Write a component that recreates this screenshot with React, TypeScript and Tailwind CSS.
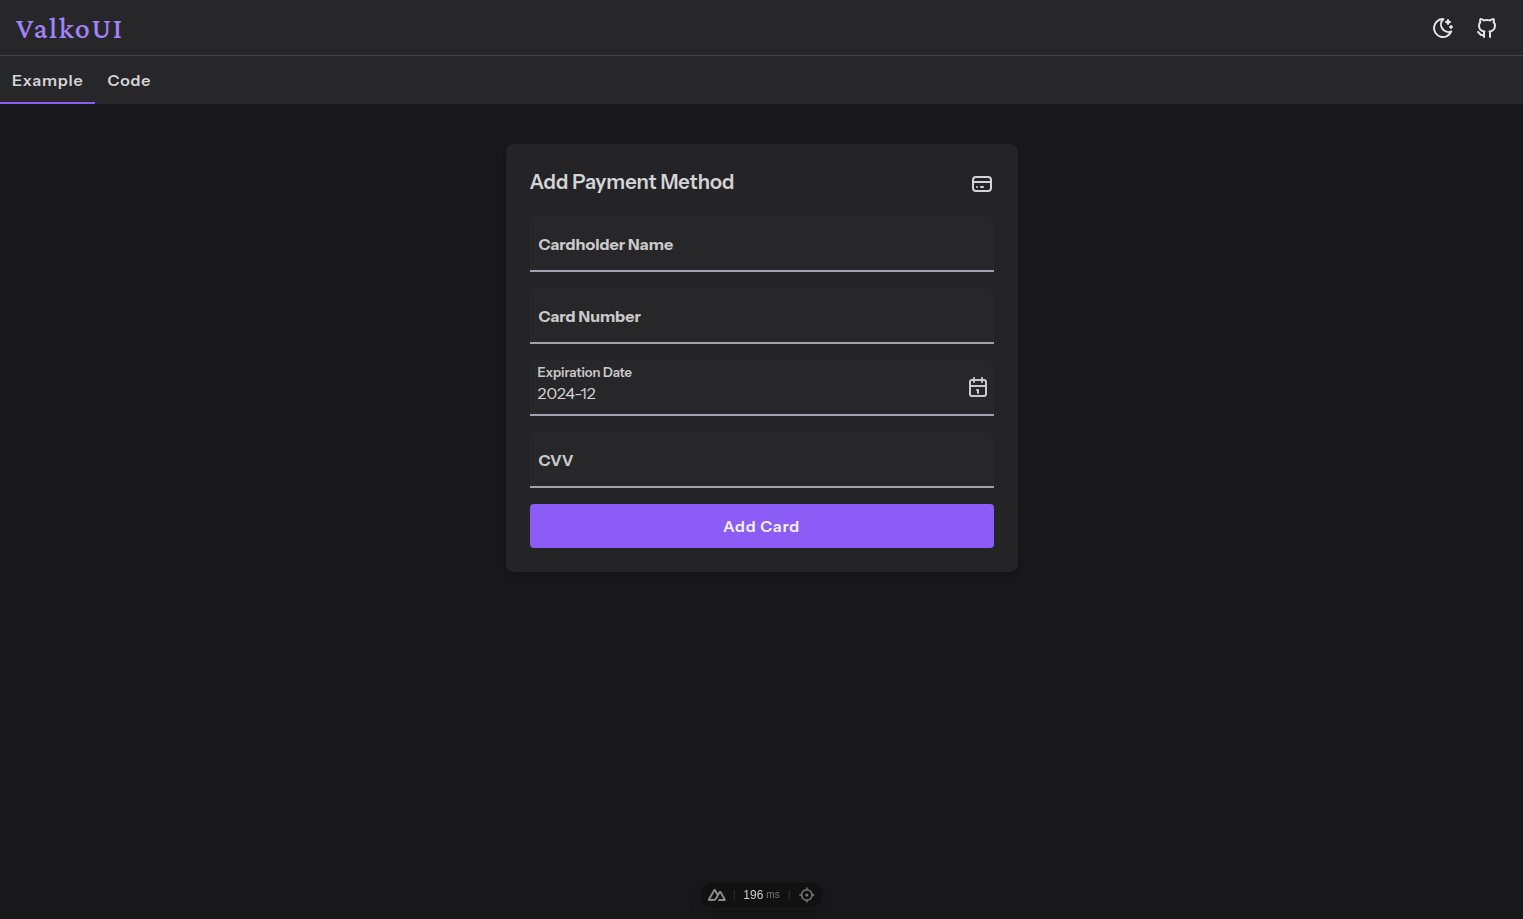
import { useState } from "react";
import { TbBrandGithub, TbCalendar, TbCreditCard, TbMoonStars } from "react-icons/tb";

type FieldProps = {
  id: string;
  label: string;
};

function Field({ id, label }: FieldProps) {
  return (
    <div className="relative rounded-t-lg border-b-2 border-[#a1a1b5] bg-[#272729]">
      <input
        id={id}
        type="text"
        placeholder=" "
        className="peer block h-[54px] w-full bg-transparent px-2 pt-4 text-base text-zinc-300 outline-none"
      />
      <label
        htmlFor={id}
        className="pointer-events-none absolute top-1 left-[9px] text-[13px] leading-4 font-bold text-[#cacaca] peer-placeholder-shown:top-4 peer-placeholder-shown:text-base peer-placeholder-shown:leading-6"
      >
        {label}
      </label>
    </div>
  );
}

function DateField() {
  return (
    <div className="flex h-14 items-center justify-between rounded-t-lg border-b-2 border-[#a1a1b5] bg-[#272729] px-1">
      <div className="flex grow flex-col pb-1">
        <label htmlFor="expiration" className="pl-1 text-[13px] leading-4 font-semibold text-[#cacaca]">
          Expiration Date
        </label>
        <input
          id="expiration"
          type="text"
          defaultValue="2024-12"
          className="h-[26px] w-full bg-transparent pl-1 text-base text-zinc-300 outline-none"
        />
      </div>
      <button type="button" aria-label="Open calendar" className="text-[#cacaca]">
        <TbCalendar className="size-6" />
      </button>
    </div>
  );
}

function DevBar() {
  return (
    <div className="fixed bottom-[10px] left-1/2 flex h-7 -translate-x-1/2 items-center gap-2 rounded-full border border-[#1c1c1c] bg-[#111111] px-2 font-['Liberation_Sans',sans-serif] shadow-lg">
      <button type="button" aria-label="Toggle DevTools" className="text-[#8c8c8c]">
        <svg viewBox="0 0 324 216" className="h-3 w-[18px]" fill="currentColor">
          <path d="M181.767 216h120.12c3.815 0 7.563-1.045 10.867-3.029a22.28 22.28 0 0 0 7.953-8.277 23.12 23.12 0 0 0-.01-22.605L240.023 42.49a22.28 22.28 0 0 0-7.95-8.275 21.3 21.3 0 0 0-21.728 0 22.28 22.28 0 0 0-7.95 8.275l-20.628 35.724-40.328-69.886a22.28 22.28 0 0 0-7.956-8.273 21.3 21.3 0 0 0-21.73 0 22.28 22.28 0 0 0-7.955 8.273L3.413 182.089a23.12 23.12 0 0 0-.01 22.605 22.28 22.28 0 0 0 7.953 8.277A21.1 21.1 0 0 0 22.223 216h75.402c29.874 0 51.906-13.31 67.066-39.28l36.805-64.664 19.714-34.605 59.166 103.944h-78.88L181.767 216Zm-85.376-34.64-52.62-.011 78.88-138.588 39.358 69.294-26.352 46.314c-10.068 16.852-21.505 22.991-39.266 22.991Z" />
        </svg>
      </button>
      <span className="h-[10px] w-px bg-[#303030]" />
      <span className="flex items-center gap-[3px] px-px text-xs text-[#cccccc]">
        196
        <span className="text-[10px] leading-4 text-[#777777]">ms</span>
      </span>
      <span className="h-[10px] w-px bg-[#303030]" />
      <button type="button" aria-label="Inspect component" className="text-[#777777]">
        <svg viewBox="0 0 24 24" className="size-[18px]" fill="none" stroke="currentColor" strokeWidth="2">
          <circle cx="12" cy="12" r="7" />
          <circle cx="12" cy="12" r="1" fill="currentColor" />
          <path d="M12 2v4M12 18v4M2 12h4M18 12h4" />
        </svg>
      </button>
    </div>
  );
}

const tabs = ["Example", "Code"];

export default function App() {
  const [active, setActive] = useState("Example");

  return (
    <div className="min-h-screen bg-[#18181a] font-['Instrument_Sans',Inter,sans-serif] text-zinc-300">
      <header className="flex h-14 items-center justify-between border-b border-[#434345] bg-[#272729] pr-[14px] pl-4">
        <a
          href="#home"
          className="font-['Crimson_Pro','Liberation_Serif',serif] text-3xl font-medium tracking-wider text-[#a184fa]"
        >
          ValkoUI
        </a>
        <div className="flex items-center text-zinc-200">
          <button type="button" aria-label="Toggle theme" className="flex size-11 items-center justify-center">
            <TbMoonStars className="size-6" />
          </button>
          <a href="#github" aria-label="GitHub" className="flex size-11 items-center justify-center">
            <TbBrandGithub className="size-6" />
          </a>
        </div>
      </header>

      <nav className="flex h-12 bg-[#272729]">
        {tabs.map((tab) => (
          <button
            key={tab}
            type="button"
            onClick={() => setActive(tab)}
            className={
              tab === active
                ? "border-b-2 border-[#8b5cf6] px-3 pt-[2px] text-base font-semibold tracking-wider"
                : "border-b-2 border-transparent px-3 pt-[2px] text-base font-semibold tracking-wider"
            }
          >
            {tab}
          </button>
        ))}
      </nav>

      <main className="flex justify-center px-4 pt-10 pb-20">
        <form
          className="flex w-full max-w-lg flex-col gap-4 rounded-lg bg-[#242426] p-6 shadow-md"
          onSubmit={(event) => event.preventDefault()}
        >
          <div className="flex h-8 items-center justify-between">
            <h1 className="pb-1 text-xl font-semibold">Add Payment Method</h1>
            <TbCreditCard className="size-6" />
          </div>
          <Field id="cardholder" label="Cardholder Name" />
          <Field id="number" label="Card Number" />
          <DateField />
          <Field id="cvv" label="CVV" />
          <button
            type="submit"
            className="h-11 rounded bg-[#8b5cf6] text-base font-semibold tracking-wider text-zinc-100"
          >
            Add Card
          </button>
        </form>
      </main>

      <DevBar />
    </div>
  );
}
